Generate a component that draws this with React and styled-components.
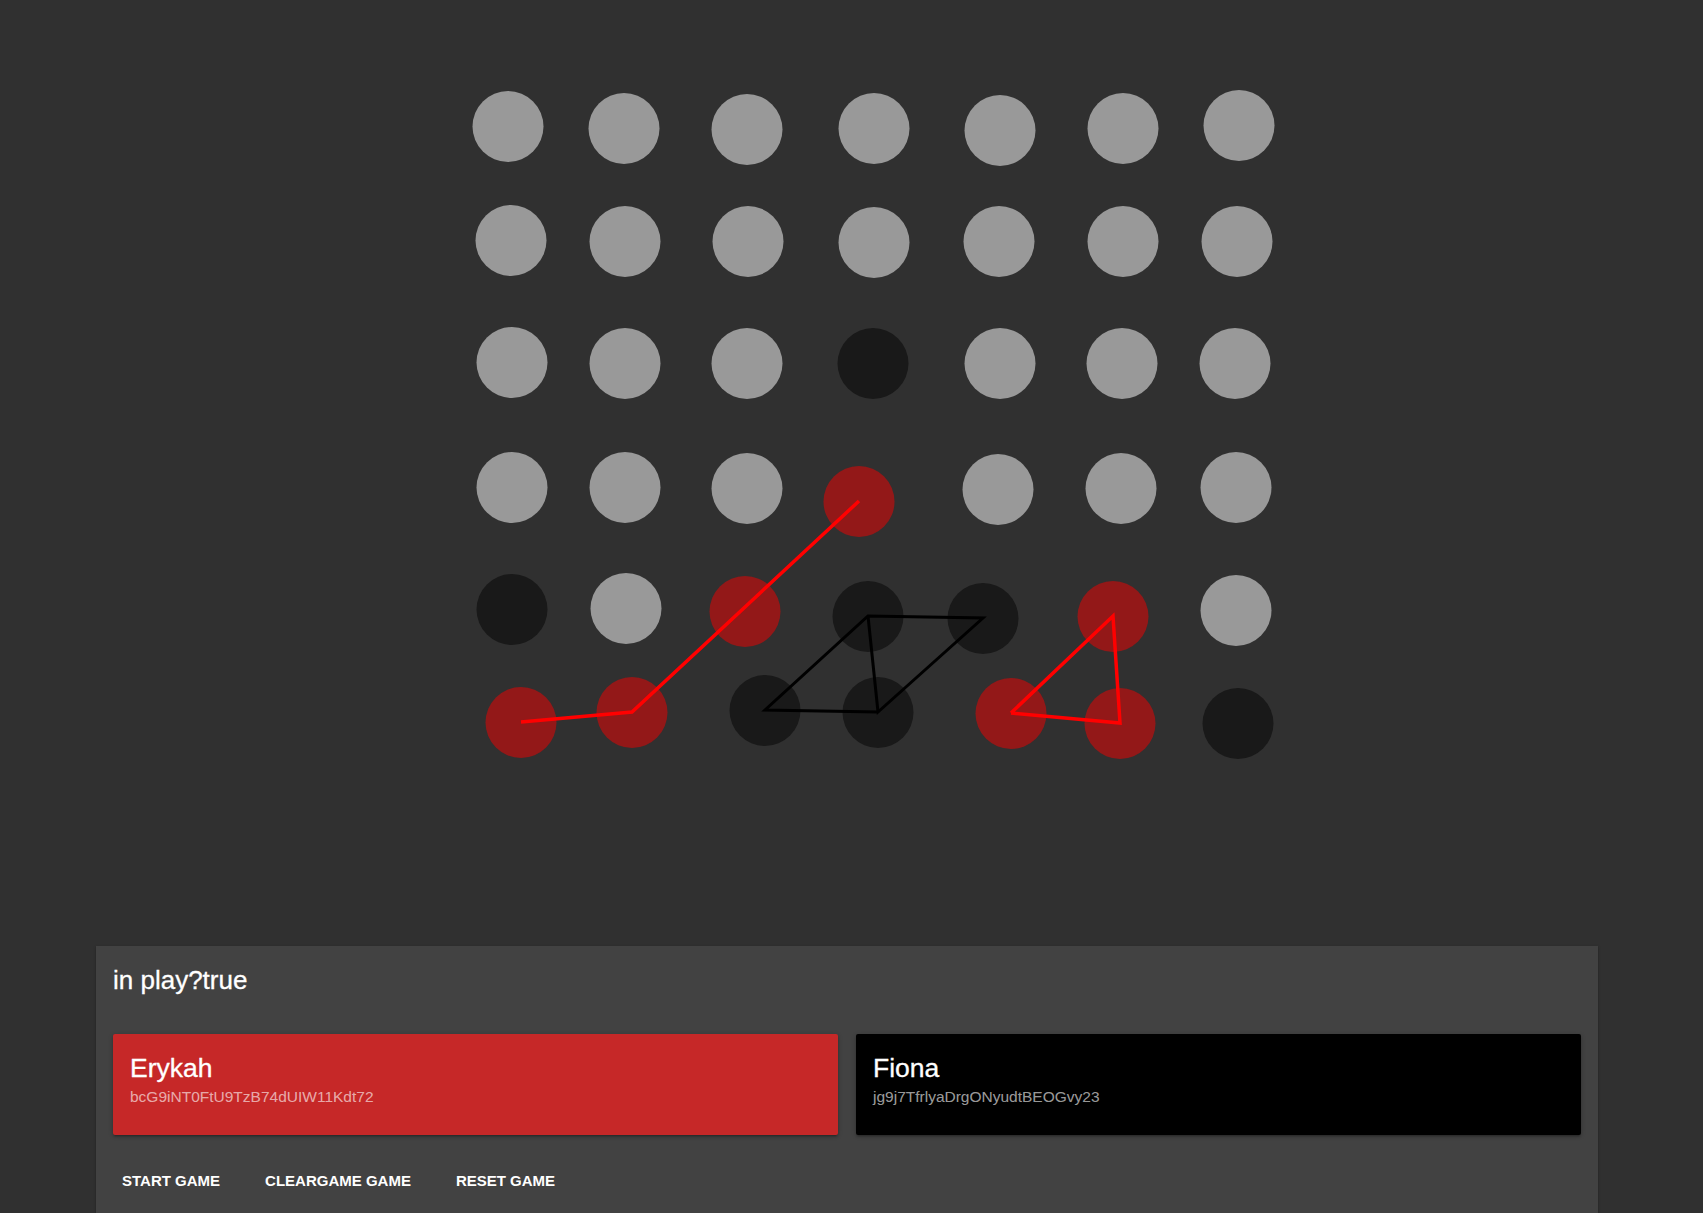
import React from 'react';
import styled, { createGlobalStyle } from 'styled-components';

const GlobalStyle = createGlobalStyle`
  html, body {
    margin: 0;
    padding: 0;
    background: #303030;
    overflow: hidden;
  }

  body {
    font-family: "Liberation Sans", Arial, Helvetica, sans-serif;
    color: #fff;
  }
`;

const CELL_W = 121;
const CELL_H = 118;
const ORIGIN = { x: 450, y: 71 };

const colour = {
  empty: '#999999',
  black: '#191919',
  red: '#931818',
};

// measured centres of each disc on the page (they wobble a little)
const board = [
  [[508, 126, 'empty'], [624, 128, 'empty'], [747, 129, 'empty'], [874, 128, 'empty'], [1000, 130, 'empty'], [1123, 128, 'empty'], [1239, 125, 'empty']],
  [[511, 240, 'empty'], [625, 241, 'empty'], [748, 241, 'empty'], [874, 242, 'empty'], [999, 241, 'empty'], [1123, 241, 'empty'], [1237, 241, 'empty']],
  [[512, 362, 'empty'], [625, 363, 'empty'], [747, 363, 'empty'], [873, 363, 'black'], [1000, 363, 'empty'], [1122, 363, 'empty'], [1235, 363, 'empty']],
  [[512, 487, 'empty'], [625, 487, 'empty'], [747, 488, 'empty'], [859, 501, 'red'], [998, 489, 'empty'], [1121, 488, 'empty'], [1236, 487, 'empty']],
  [[512, 609, 'black'], [626, 608, 'empty'], [745, 611, 'red'], [868, 616, 'black'], [983, 618, 'black'], [1113, 616, 'red'], [1236, 610, 'empty']],
  [[521, 722, 'red'], [632, 712, 'red'], [765, 710, 'black'], [878, 712, 'black'], [1011, 713, 'red'], [1120, 723, 'red'], [1238, 723, 'black']],
];

const links = [
  { stroke: '#ff0000', width: 3.5, cells: [[5, 0], [5, 1], [3, 3]] },
  { stroke: '#000000', width: 3, cells: [[5, 3], [5, 2], [4, 3], [4, 4], [5, 3], [4, 3]] },
  { stroke: '#ff0000', width: 3.5, cells: [[5, 4], [4, 5], [5, 5], [5, 4]] },
];

const players = [
  { name: 'Erykah', id: 'bcG9iNT0FtU9TzB74dUIW11Kdt72', tone: 'red' },
  { name: 'Fiona', id: 'jg9j7TfrlyaDrgONyudtBEOGvy23', tone: 'black' },
];

const Page = styled.div`
  display: flex;
  flex-direction: column;
  min-height: 100vh;
`;

const Stage = styled.section`
  box-sizing: border-box;
  height: 946px;
  padding: ${ORIGIN.y}px 0 0 ${ORIGIN.x}px;
`;

const Board = styled.div`
  position: relative;
  display: grid;
  grid-template-columns: repeat(7, ${CELL_W}px);
  grid-auto-rows: ${CELL_H}px;
  width: ${CELL_W * 7}px;
`;

const Cell = styled.div`
  display: flex;
  align-items: center;
  justify-content: center;
`;

const Disc = styled.div`
  width: 71px;
  height: 71px;
  border-radius: 50%;
  background: ${(p) => colour[p.$state]};
`;

const Lines = styled.svg`
  position: absolute;
  inset: 0;
  width: 100%;
  height: 100%;
  overflow: visible;
  pointer-events: none;
`;

const Panel = styled.div`
  box-sizing: border-box;
  width: 1502px;
  height: 267px;
  margin-left: 96px;
  padding: 19px 17px 0;
  background: #424242;
  box-shadow: 0 1px 3px rgba(0, 0, 0, 0.2), 0 1px 1px rgba(0, 0, 0, 0.14);
`;

const Title = styled.h2`
  margin: 0 0 39px;
  font-size: 26px;
  line-height: 30px;
  font-weight: 400;
  color: #fff;
  -webkit-text-stroke: 0.3px #fff;
`;

const Players = styled.div`
  display: grid;
  grid-template-columns: 1fr 1fr;
  gap: 18px;
`;

const PlayerCard = styled.div`
  box-sizing: border-box;
  height: 101px;
  padding: 19px 17px 0;
  border-radius: 2px;
  background: ${(p) => (p.$tone === 'red' ? '#c62828' : '#000')};
  box-shadow: 0 1px 5px rgba(0, 0, 0, 0.2), 0 2px 2px rgba(0, 0, 0, 0.14),
    0 3px 1px -2px rgba(0, 0, 0, 0.12);
`;

const PlayerName = styled.div`
  font-size: 26.5px;
  line-height: 30px;
  margin-bottom: 4px;
  color: #fff;
  -webkit-text-stroke: 0.3px #fff;
`;

const PlayerId = styled.div`
  font-size: 15.5px;
  line-height: 20px;
  color: rgba(255, 255, 255, 0.62);
`;

const Actions = styled.div`
  display: flex;
  gap: 27px;
  margin-top: 28px;
`;

const TextButton = styled.button`
  padding: 8px 9px;
  border: 0;
  background: transparent;
  font-family: inherit;
  font-size: 15px;
  line-height: 20px;
  font-weight: 700;
  text-transform: uppercase;
  color: #fff;
  cursor: pointer;
`;

const local = (r, c) => {
  const [x, y] = board[r][c];
  return [x - ORIGIN.x, y - ORIGIN.y];
};

export default function App() {
  return (
    <Page>
      <GlobalStyle />
      <Stage>
        <Board>
          {board.map((row, r) =>
            row.map(([x, y, state], c) => {
              const dx = x - ORIGIN.x - (CELL_W / 2 + CELL_W * c);
              const dy = y - ORIGIN.y - (CELL_H / 2 + CELL_H * r);
              return (
                <Cell key={`${r}-${c}`}>
                  <Disc $state={state} style={{ transform: `translate(${dx}px, ${dy}px)` }} />
                </Cell>
              );
            })
          )}
          <Lines>
            {links.map((l, i) => (
              <polyline
                key={i}
                points={l.cells.map(([r, c]) => local(r, c).join(',')).join(' ')}
                fill="none"
                stroke={l.stroke}
                strokeWidth={l.width}
                strokeLinejoin="miter"
              />
            ))}
          </Lines>
        </Board>
      </Stage>

      <Panel>
        <Title>in play?true</Title>
        <Players>
          {players.map((p) => (
            <PlayerCard key={p.id} $tone={p.tone}>
              <PlayerName>{p.name}</PlayerName>
              <PlayerId>{p.id}</PlayerId>
            </PlayerCard>
          ))}
        </Players>
        <Actions>
          <TextButton>Start game</TextButton>
          <TextButton>Cleargame game</TextButton>
          <TextButton>Reset game</TextButton>
        </Actions>
      </Panel>
    </Page>
  );
}
